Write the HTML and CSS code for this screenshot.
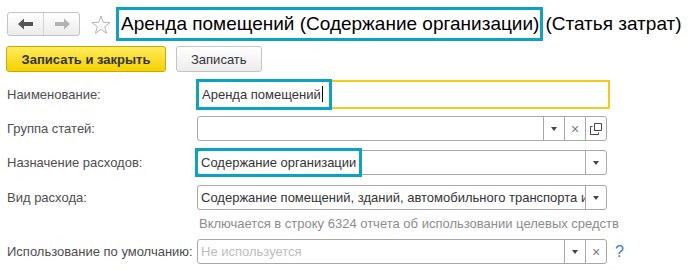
FILE: index.html
```html
<!DOCTYPE html>
<html lang="ru">
<head>
  <meta charset="UTF-8">
  <title>Статья затрат</title>
  <link rel="stylesheet" href="styles.css">
</head>
<body>
  <div class="form">
    <!-- Title bar -->
    <div class="titlebar">
      <div class="nav">
        <span class="nav-btn">
          <svg width="16" height="12" viewBox="0 0 16 12"><path d="M0 6 L6 0.5 L6 4 L15 4 L15 8 L6 8 L6 11.5 Z" fill="#555"/></svg>
        </span>
        <span class="nav-btn">
          <svg width="16" height="12" viewBox="0 0 16 12"><path d="M16 6 L10 0.5 L10 4 L1 4 L1 8 L10 8 L10 11.5 Z" fill="#b3b3b3"/></svg>
        </span>
      </div>
      <svg class="star" width="20" height="20" viewBox="0 0 20 20"><path d="M10 1 L12.3 7.4 L19 7.5 L13.7 11.6 L15.6 18.3 L10 14.4 L4.4 18.3 L6.3 11.6 L1 7.5 L7.7 7.4 Z" fill="none" stroke="#b5b5b5" stroke-width="1"/></svg>
      <h1 class="title"><span class="mark">Аренда помещений (Содержание организации)</span><span class="kind">(Статья затрат)</span></h1>
    </div>

    <!-- Command bar -->
    <div class="toolbar">
      <button class="btn btn-primary">Записать и закрыть</button>
      <button class="btn">Записать</button>
    </div>

    <!-- Fields -->
    <div class="fields">
      <div class="row row-name">
        <label>Наименование:</label>
        <div class="input input-active"><span class="value marked">Аренда помещений<span class="caret"></span></span></div>
      </div>

      <div class="row row-group">
        <label>Группа статей:</label>
        <div class="input">
          <span class="value"></span>
          <span class="ibtn"><i class="tri"></i></span>
          <span class="ibtn"><i class="cross">×</i></span>
          <span class="ibtn">
            <svg width="12" height="12" viewBox="0 0 12 12"><path d="M4.5 0.5 H11.5 V7.5 H4.5 Z" fill="none" stroke="#444"/><path d="M2.5 3.5 H0.5 V11.5 H8.5 V9.5" fill="none" stroke="#444"/></svg>
          </span>
        </div>
      </div>

      <div class="row row-purpose">
        <label>Назначение расходов:</label>
        <div class="input">
          <span class="value marked">Содержание организации</span>
          <span class="ibtn"><i class="tri"></i></span>
        </div>
      </div>

      <div class="row row-kind">
        <label>Вид расхода:</label>
        <div class="input">
          <span class="value clip">Содержание помещений, зданий, автомобильного транспорта и</span>
          <span class="ibtn"><i class="tri"></i></span>
        </div>
      </div>

      <div class="row row-hint">
        <span></span>
        <div class="hint">Включается в строку 6324 отчета об использовании целевых средств</div>
      </div>

      <div class="row row-default">
        <label>Использование по умолчанию:</label>
        <div class="input">
          <span class="value placeholder">Не используется</span>
          <span class="ibtn"><i class="tri"></i></span>
          <span class="ibtn"><i class="cross">×</i></span>
        </div>
        <span class="help">?</span>
      </div>
    </div>
  </div>
</body>
</html>
```

FILE: styles.css
```css
* {
  margin: 0;
  padding: 0;
  box-sizing: border-box;
}

body {
  background: #ffffff;
  font-family: 'Liberation Sans', Arial, sans-serif;
  font-size: 13px;
  color: #4d4d4d;
}

.form {
  padding: 8px 0 0 6px;
}

/* Title bar */
.titlebar {
  display: flex;
  align-items: center;
  height: 32px;
}

.nav {
  flex-shrink: 0;
  display: flex;
  width: 73px;
  height: 24px;
  margin-left: 1px;
  border: 1px solid #c4c4c4;
  border-radius: 3px;
  background: linear-gradient(#ffffff, #ececec);
}

.nav-btn {
  flex: 1;
  display: flex;
  align-items: center;
  justify-content: center;
}

.nav-btn + .nav-btn {
  border-left: 1px solid #d4d4d4;
}

.star {
  flex-shrink: 0;
  margin-left: 11px;
  margin-top: 2px;
}

.title {
  flex-shrink: 0;
  margin-left: 5px;
  font-size: 19px;
  font-weight: normal;
  color: #000;
  white-space: nowrap;
}

.title .mark {
  display: inline-block;
  border: 3px solid #0aa3c4;
  padding: 3px 1px 3px 2px;
}

.title .kind {
  margin-left: 2px;
}

/* Command bar */
.toolbar {
  display: flex;
  gap: 10px;
  margin-top: 6px;
}

.btn {
  height: 26px;
  padding: 0 14px;
  border: 1px solid #c4c4c4;
  border-radius: 3px;
  background: linear-gradient(#ffffff, #ececec);
  font-family: inherit;
  font-size: 13px;
  color: #333;
}

.btn-primary {
  width: 160px;
  border-color: #c9a800;
  background: linear-gradient(#ffec5c, #f3d100);
  font-weight: bold;
  color: #333;
}

/* Fields */
.fields {
  margin-top: 8px;
}

.row {
  display: grid;
  grid-template-columns: 191px auto auto;
  align-items: center;
  justify-content: start;
}

.row label {
  padding-left: 1px;
}

.input {
  display: flex;
  width: 410px;
  height: 25px;
  border: 1px solid #a8a8a8;
  border-radius: 3px;
  background: #fff;
}

.value {
  flex: 1;
  padding: 0 3px;
  line-height: 23px;
  color: #333;
  white-space: nowrap;
  overflow: hidden;
}

.value.clip {
  text-overflow: clip;
}

.value.placeholder {
  color: #bdbdbd;
}

.value.marked {
  flex: none;
  margin-right: auto;
  outline: 3px solid #0aa3c4;
  overflow: visible;
}

.ibtn {
  width: 21px;
  display: flex;
  align-items: center;
  justify-content: center;
  border-left: 1px solid #a8a8a8;
}

.tri {
  width: 0;
  height: 0;
  border-left: 3.5px solid transparent;
  border-right: 3.5px solid transparent;
  border-top: 4px solid #444;
}

.cross {
  font-style: normal;
  font-size: 14px;
  color: #7a7a7a;
}

.row-name .input {
  width: 413px;
  height: 29px;
  border: 2px solid #f7c91c;
  border-radius: 0;
}

.row-name .value {
  line-height: 25px;
  padding-right: 6px;
}

.caret {
  display: inline-block;
  width: 1px;
  height: 16px;
  margin-left: 1px;
  background: #000;
  vertical-align: -3px;
}

.row-group {
  margin-top: 7px;
}

.row-purpose {
  margin-top: 9px;
}

.row-kind {
  margin-top: 10px;
}

.row-kind .value {
  padding-right: 0;
}

.row-hint {
  margin-top: 6px;
}

.hint {
  padding-left: 2px;
  color: #8c8c8c;
}

.row-default {
  margin-top: 8px;
}

.help {
  margin-left: 8px;
  font-size: 16px;
  color: #2f7dd1;
}
```
